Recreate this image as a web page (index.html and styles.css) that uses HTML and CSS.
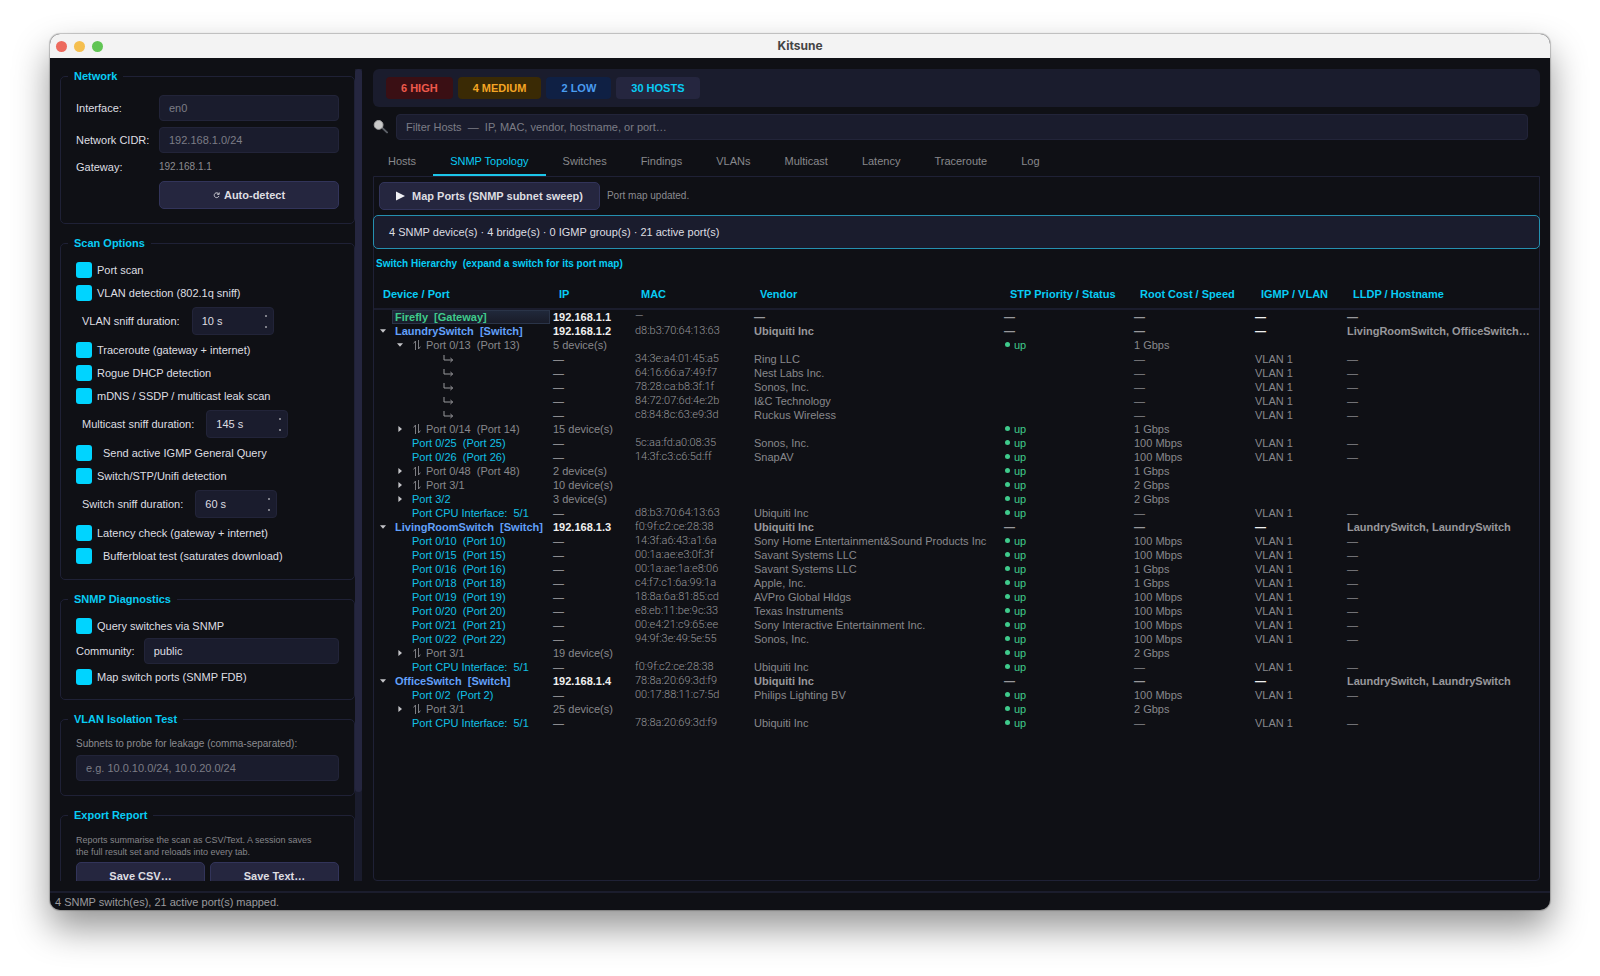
FILE: index.html
```html
<!DOCTYPE html>
<html lang="en">
<head>
<meta charset="utf-8">
<title>Kitsune</title>
<link rel="stylesheet" href="styles.css">
</head>
<body>
<svg class="defs" aria-hidden="true">
  <symbol id="open" viewBox="0 0 8 8"><path d="M1 2.2h6L4 5.8z" fill="#c4c4c8"/></symbol>
  <symbol id="shut" viewBox="0 0 8 8"><path d="M2.4 1v6L6 4z" fill="#c4c4c8"/></symbol>
  <symbol id="trunk" viewBox="0 0 8 10"><path d="M2.5 10V1L.6 3.4M5.5 0v9l1.9-2.4" fill="none" stroke="#8a8a8e" stroke-width="0.9"/></symbol>
  <symbol id="child" viewBox="0 0 11 8"><path d="M1 0v5h8.5M7.4 3l2.3 2-2.3 2" fill="none" stroke="#98989c" stroke-width="1"/></symbol>
</svg>
<div class="window">
  <header class="titlebar">
    <div class="lights"><span class="light red"></span><span class="light amber"></span><span class="light green"></span></div>
    <h1>Kitsune</h1>
  </header>
  <div class="body">
    <aside class="sidebar">
      <div class="groups">
        <fieldset class="network">
          <legend>Network</legend>
          <div class="form">
            <label for="iface">Interface:</label><input class="field" id="iface" placeholder="en0">
            <label for="cidr">Network CIDR:</label><input class="field" id="cidr" placeholder="192.168.1.0/24">
            <span>Gateway:</span><span class="small">192.168.1.1</span>
            <button class="btn detect"><svg width="7" height="8" viewBox="0 0 7 8" aria-hidden="true"><path d="M5.7 3A2.4 2.4 0 1 0 5.9 5M6.2 1.4V3.4H4.2" fill="none" stroke="#d8d8de" stroke-width="0.9"/></svg>Auto-detect</button>
          </div>
        </fieldset>
        <fieldset class="scan">
          <legend>Scan Options</legend>
          <div class="stack">
            <label class="check"><input type="checkbox" checked>Port scan</label>
            <label class="check"><input type="checkbox" checked>VLAN detection (802.1q sniff)</label>
            <div class="spinrow"><label for="s1">VLAN sniff duration:</label><div class="spin"><input id="s1" value="10 s"><div class="steps"><button aria-label="Increase"></button><button aria-label="Decrease"></button></div></div></div>
            <label class="check"><input type="checkbox" checked>Traceroute (gateway + internet)</label>
            <label class="check"><input type="checkbox" checked>Rogue DHCP detection</label>
            <label class="check"><input type="checkbox" checked>mDNS / SSDP / multicast leak scan</label>
            <div class="spinrow"><label for="s2">Multicast sniff duration:</label><div class="spin"><input id="s2" value="145 s"><div class="steps"><button aria-label="Increase"></button><button aria-label="Decrease"></button></div></div></div>
            <label class="check sub"><input type="checkbox" checked>Send active IGMP General Query</label>
            <label class="check"><input type="checkbox" checked>Switch/STP/Unifi detection</label>
            <div class="spinrow"><label for="s3">Switch sniff duration:</label><div class="spin"><input id="s3" value="60 s"><div class="steps"><button aria-label="Increase"></button><button aria-label="Decrease"></button></div></div></div>
            <label class="check"><input type="checkbox" checked>Latency check (gateway + internet)</label>
            <label class="check sub"><input type="checkbox" checked>Bufferbloat test (saturates download)</label>
          </div>
        </fieldset>
        <fieldset>
          <legend>SNMP Diagnostics</legend>
          <div class="stack tight">
            <label class="check"><input type="checkbox" checked>Query switches via SNMP</label>
            <div class="inline"><label for="comm">Community:</label><input class="field" id="comm" value="public"></div>
            <label class="check"><input type="checkbox" checked>Map switch ports (SNMP FDB)</label>
          </div>
        </fieldset>
        <fieldset>
          <legend>VLAN Isolation Test</legend>
          <div class="stack tight">
            <label class="small" for="subnets">Subnets to probe for leakage (comma-separated):</label>
            <input class="field" id="subnets" placeholder="e.g. 10.0.10.0/24, 10.0.20.0/24">
          </div>
        </fieldset>
        <fieldset>
          <legend>Export Report</legend>
          <div class="stack tight">
            <p class="tiny">Reports summarise the scan as CSV/Text. A session saves<br>the full result set and reloads into every tab.</p>
            <div class="pair"><button class="btn">Save CSV…</button><button class="btn">Save Text…</button></div>
          </div>
        </fieldset>
      </div>
      <div class="track"><div class="thumb"></div></div>
    </aside>
    <main class="main">
      <div class="summary">
        <span class="badge high">6 HIGH</span><span class="badge medium">4 MEDIUM</span><span class="badge low">2 LOW</span><span class="badge hosts">30 HOSTS</span>
      </div>
      <div class="search">
        <svg width="15" height="15" viewBox="0 0 15 15" aria-hidden="true"><path d="M9 7.6l5 4.8" stroke="#5b5f66" stroke-width="2" stroke-linecap="round"/><circle cx="5.6" cy="4.9" r="4.4" fill="#c9c9c9" stroke="#a9a9a9"/></svg>
        <input class="field" aria-label="Filter hosts" placeholder="Filter Hosts &nbsp;—&nbsp; IP, MAC, vendor, hostname, or port…">
      </div>
      <div class="tabs" role="tablist">
        <button role="tab">Hosts</button><button role="tab" class="active" aria-selected="true">SNMP Topology</button><button role="tab">Switches</button><button role="tab">Findings</button><button role="tab">VLANs</button><button role="tab">Multicast</button><button role="tab">Latency</button><button role="tab">Traceroute</button><button role="tab">Log</button>
      </div>
      <section class="panel">
        <div class="actions">
          <button class="btn map"><svg width="9" height="10" viewBox="0 0 9 10" aria-hidden="true"><path d="M0 0.5v9L9 5z" fill="#f0f0f4"/></svg>Map Ports (SNMP subnet sweep)</button>
          <span class="small">Port map updated.</span>
        </div>
        <div class="stats">4 SNMP device(s) · 4 bridge(s) · 0 IGMP group(s) · 21 active port(s)</div>
        <h2>Switch Hierarchy &nbsp;(expand a switch for its port map)</h2>
        <table>
          <colgroup><col class="c1"><col class="c2"><col class="c3"><col class="c4"><col class="c5"><col class="c6"><col class="c7"><col></colgroup>
          <thead><tr><th>Device / Port</th><th>IP</th><th>MAC</th><th>Vendor</th><th>STP Priority / Status</th><th>Root Cost / Speed</th><th>IGMP / VLAN</th><th>LLDP / Hostname</th></tr></thead>
          <tbody>
            <tr class="dev gw"><td><div class="node"><i></i><b>Firefly &nbsp;[Gateway]</b></div></td><td>192.168.1.1</td><td>—</td><td>—</td><td>—</td><td>—</td><td>—</td><td>—</td></tr>
            <tr class="dev"><td><div class="node"><i><svg><use href="#open"/></svg></i><b>LaundrySwitch &nbsp;[Switch]</b></div></td><td>192.168.1.2</td><td>d8:b3:70:64:13:63</td><td>Ubiquiti Inc</td><td>—</td><td>—</td><td>—</td><td>LivingRoomSwitch, OfficeSwitch…</td></tr>
            <tr class="trunk"><td><div class="node l1"><i><svg><use href="#open"/></svg></i><svg class="tr"><use href="#trunk"/></svg>Port 0/13 &nbsp;(Port 13)</div></td><td>5 device(s)</td><td></td><td></td><td class="up">up</td><td>1 Gbps</td><td></td><td></td></tr>
            <tr><td><div class="node l2"><svg class="ch"><use href="#child"/></svg></div></td><td>—</td><td>34:3e:a4:01:45:a5</td><td>Ring LLC</td><td></td><td>—</td><td>VLAN 1</td><td>—</td></tr>
            <tr><td><div class="node l2"><svg class="ch"><use href="#child"/></svg></div></td><td>—</td><td>64:16:66:a7:49:f7</td><td>Nest Labs Inc.</td><td></td><td>—</td><td>VLAN 1</td><td>—</td></tr>
            <tr><td><div class="node l2"><svg class="ch"><use href="#child"/></svg></div></td><td>—</td><td>78:28:ca:b8:3f:1f</td><td>Sonos, Inc.</td><td></td><td>—</td><td>VLAN 1</td><td>—</td></tr>
            <tr><td><div class="node l2"><svg class="ch"><use href="#child"/></svg></div></td><td>—</td><td>84:72:07:6d:4e:2b</td><td>I&amp;C Technology</td><td></td><td>—</td><td>VLAN 1</td><td>—</td></tr>
            <tr><td><div class="node l2"><svg class="ch"><use href="#child"/></svg></div></td><td>—</td><td>c8:84:8c:63:e9:3d</td><td>Ruckus Wireless</td><td></td><td>—</td><td>VLAN 1</td><td>—</td></tr>
            <tr class="trunk"><td><div class="node l1"><i><svg><use href="#shut"/></svg></i><svg class="tr"><use href="#trunk"/></svg>Port 0/14 &nbsp;(Port 14)</div></td><td>15 device(s)</td><td></td><td></td><td class="up">up</td><td>1 Gbps</td><td></td><td></td></tr>
            <tr><td><div class="node l1"><i></i>Port 0/25 &nbsp;(Port 25)</div></td><td>—</td><td>5c:aa:fd:a0:08:35</td><td>Sonos, Inc.</td><td class="up">up</td><td>100 Mbps</td><td>VLAN 1</td><td>—</td></tr>
            <tr><td><div class="node l1"><i></i>Port 0/26 &nbsp;(Port 26)</div></td><td>—</td><td>14:3f:c3:c6:5d:ff</td><td>SnapAV</td><td class="up">up</td><td>100 Mbps</td><td>VLAN 1</td><td>—</td></tr>
            <tr class="trunk"><td><div class="node l1"><i><svg><use href="#shut"/></svg></i><svg class="tr"><use href="#trunk"/></svg>Port 0/48 &nbsp;(Port 48)</div></td><td>2 device(s)</td><td></td><td></td><td class="up">up</td><td>1 Gbps</td><td></td><td></td></tr>
            <tr class="trunk"><td><div class="node l1"><i><svg><use href="#shut"/></svg></i><svg class="tr"><use href="#trunk"/></svg>Port 3/1</div></td><td>10 device(s)</td><td></td><td></td><td class="up">up</td><td>2 Gbps</td><td></td><td></td></tr>
            <tr class="multi"><td><div class="node l1"><i><svg><use href="#shut"/></svg></i>Port 3/2</div></td><td>3 device(s)</td><td></td><td></td><td class="up">up</td><td>2 Gbps</td><td></td><td></td></tr>
            <tr><td><div class="node l1"><i></i>Port CPU Interface: &nbsp;5/1</div></td><td>—</td><td>d8:b3:70:64:13:63</td><td>Ubiquiti Inc</td><td class="up">up</td><td>—</td><td>VLAN 1</td><td>—</td></tr>
            <tr class="dev"><td><div class="node"><i><svg><use href="#open"/></svg></i><b>LivingRoomSwitch &nbsp;[Switch]</b></div></td><td>192.168.1.3</td><td>f0:9f:c2:ce:28:38</td><td>Ubiquiti Inc</td><td>—</td><td>—</td><td>—</td><td>LaundrySwitch, LaundrySwitch</td></tr>
            <tr><td><div class="node l1"><i></i>Port 0/10 &nbsp;(Port 10)</div></td><td>—</td><td>14:3f:a6:43:a1:6a</td><td>Sony Home Entertainment&amp;Sound Products Inc</td><td class="up">up</td><td>100 Mbps</td><td>VLAN 1</td><td>—</td></tr>
            <tr><td><div class="node l1"><i></i>Port 0/15 &nbsp;(Port 15)</div></td><td>—</td><td>00:1a:ae:e3:0f:3f</td><td>Savant Systems LLC</td><td class="up">up</td><td>100 Mbps</td><td>VLAN 1</td><td>—</td></tr>
            <tr><td><div class="node l1"><i></i>Port 0/16 &nbsp;(Port 16)</div></td><td>—</td><td>00:1a:ae:1a:e8:06</td><td>Savant Systems LLC</td><td class="up">up</td><td>1 Gbps</td><td>VLAN 1</td><td>—</td></tr>
            <tr><td><div class="node l1"><i></i>Port 0/18 &nbsp;(Port 18)</div></td><td>—</td><td>c4:f7:c1:6a:99:1a</td><td>Apple, Inc.</td><td class="up">up</td><td>1 Gbps</td><td>VLAN 1</td><td>—</td></tr>
            <tr><td><div class="node l1"><i></i>Port 0/19 &nbsp;(Port 19)</div></td><td>—</td><td>18:8a:6a:81:85:cd</td><td>AVPro Global Hldgs</td><td class="up">up</td><td>100 Mbps</td><td>VLAN 1</td><td>—</td></tr>
            <tr><td><div class="node l1"><i></i>Port 0/20 &nbsp;(Port 20)</div></td><td>—</td><td>e8:eb:11:be:9c:33</td><td>Texas Instruments</td><td class="up">up</td><td>100 Mbps</td><td>VLAN 1</td><td>—</td></tr>
            <tr><td><div class="node l1"><i></i>Port 0/21 &nbsp;(Port 21)</div></td><td>—</td><td>00:e4:21:c9:65:ee</td><td>Sony Interactive Entertainment Inc.</td><td class="up">up</td><td>100 Mbps</td><td>VLAN 1</td><td>—</td></tr>
            <tr><td><div class="node l1"><i></i>Port 0/22 &nbsp;(Port 22)</div></td><td>—</td><td>94:9f:3e:49:5e:55</td><td>Sonos, Inc.</td><td class="up">up</td><td>100 Mbps</td><td>VLAN 1</td><td>—</td></tr>
            <tr class="trunk"><td><div class="node l1"><i><svg><use href="#shut"/></svg></i><svg class="tr"><use href="#trunk"/></svg>Port 3/1</div></td><td>19 device(s)</td><td></td><td></td><td class="up">up</td><td>2 Gbps</td><td></td><td></td></tr>
            <tr><td><div class="node l1"><i></i>Port CPU Interface: &nbsp;5/1</div></td><td>—</td><td>f0:9f:c2:ce:28:38</td><td>Ubiquiti Inc</td><td class="up">up</td><td>—</td><td>VLAN 1</td><td>—</td></tr>
            <tr class="dev"><td><div class="node"><i><svg><use href="#open"/></svg></i><b>OfficeSwitch &nbsp;[Switch]</b></div></td><td>192.168.1.4</td><td>78:8a:20:69:3d:f9</td><td>Ubiquiti Inc</td><td>—</td><td>—</td><td>—</td><td>LaundrySwitch, LaundrySwitch</td></tr>
            <tr><td><div class="node l1"><i></i>Port 0/2 &nbsp;(Port 2)</div></td><td>—</td><td>00:17:88:11:c7:5d</td><td>Philips Lighting BV</td><td class="up">up</td><td>100 Mbps</td><td>VLAN 1</td><td>—</td></tr>
            <tr class="trunk"><td><div class="node l1"><i><svg><use href="#shut"/></svg></i><svg class="tr"><use href="#trunk"/></svg>Port 3/1</div></td><td>25 device(s)</td><td></td><td></td><td class="up">up</td><td>2 Gbps</td><td></td><td></td></tr>
            <tr><td><div class="node l1"><i></i>Port CPU Interface: &nbsp;5/1</div></td><td>—</td><td>78:8a:20:69:3d:f9</td><td>Ubiquiti Inc</td><td class="up">up</td><td>—</td><td>VLAN 1</td><td>—</td></tr>
          </tbody>
        </table>
      </section>
    </main>
  </div>
  <footer class="status">4 SNMP switch(es), 21 active port(s) mapped.</footer>
</div>
</body>
</html>
```
FILE: styles.css
```css
* { box-sizing: border-box; }
body {
  margin: 0;
  height: 100vh;
  padding: 34px 50px 66px;
  background: #fff;
  font: 11px/14px "Liberation Sans", Arial, sans-serif;
  color: #dedee2;
  overflow: hidden;
}
button, input { font: inherit; color: inherit; margin: 0; }
h1, h2, p { margin: 0; font-size: inherit; }
.defs { position: absolute; width: 0; height: 0; }

.window {
  height: 100%;
  display: flex;
  flex-direction: column;
  border-radius: 10px;
  overflow: hidden;
  background: #0f1015;
  box-shadow: 0 0 1px 1px rgba(0, 0, 0, .22), 0 18px 36px rgba(0, 0, 0, .42);
}
.titlebar {
  flex: none;
  height: 24px;
  display: grid;
  grid-template-columns: 1fr auto 1fr;
  align-items: center;
  padding: 0 6px;
  background: #f3f3f3;
  color: #444;
}
.titlebar h1 { font: bold 12px/14px Inter, sans-serif; }
.lights { display: flex; gap: 7px; }
.light { width: 11px; height: 11px; border-radius: 50%; }
.red { background: #ed6a5e; }
.amber { background: #f5bf4f; }
.green { background: #61c554; }

.body { flex: 1; min-height: 0; display: flex; gap: 11px; padding: 11px 10px 10px; }
.sidebar { flex: none; width: 302px; display: flex; overflow: hidden; }
.groups { flex: 1; min-width: 0; display: flex; flex-direction: column; gap: 12px; overflow: hidden; }
.track { width: 7px; background: #1a1c2d; }
.thumb { height: 89%; background: #25263f; border-radius: 4px; }

fieldset {
  flex: none;
  min-width: 0;
  margin: 0;
  padding: 11px 15px 14px;
  border: 1px solid #1f2136;
  border-radius: 5px;
}
.network { padding-top: 12px; }
.scan { padding-bottom: 15px; }
legend { margin-left: -8px; padding: 0 6px; height: 14px; color: #08ccf4; font-weight: bold; }
.form { display: grid; grid-template-columns: 76px 1fr; gap: 6px 7px; align-items: center; white-space: nowrap; }
.form > span { line-height: 16px; }
.field {
  width: 100%;
  min-width: 0;
  height: 26px;
  padding: 0 9px;
  background: #1a1c2d;
  border: 1px solid #222439;
  border-radius: 4px;
  outline: none;
}
.field::placeholder { color: #7c7d86; opacity: 1; }
.small { font-size: 10px; color: #8b8b90; }
.tiny { font-size: 9px; line-height: 12px; color: #85858a; padding-top: 1px; white-space: nowrap; }
.btn {
  height: 28px;
  padding: 0 14px;
  display: flex;
  align-items: center;
  justify-content: center;
  background: #25263f;
  border: 1px solid #32345a;
  border-radius: 5px;
  font-weight: bold;
}
.detect { grid-column: 2; gap: 4px; }
.stack { display: flex; flex-direction: column; gap: 6px; }
.tight { gap: 4px; }
.check { display: flex; align-items: center; gap: 5px; height: 17px; }
.sub { gap: 11px; }
.check input { appearance: none; width: 16px; height: 16px; border-radius: 3px; background: #00d4ff; }
.spinrow { display: flex; align-items: center; gap: 12px; padding-left: 6px; }
.spin { display: flex; width: 82px; height: 28px; background: #1a1c2d; border: 1px solid #222439; border-radius: 4px; }
.spin input { flex: 1; min-width: 0; padding: 0 9px; background: none; border: 0; outline: none; }
.steps { width: 14px; display: flex; flex-direction: column; justify-content: center; }
.steps button { height: 11px; padding: 0; border: 0; background: none; display: grid; place-items: center; }
.steps button::before { content: ""; width: 2px; height: 2px; border-radius: 1px; background: #a0a0a8; }
.inline { display: flex; align-items: center; gap: 9px; }
.pair { display: grid; grid-template-columns: 1fr 1fr; gap: 5px; }

.main { flex: 1; min-width: 0; display: flex; flex-direction: column; }
.summary { display: flex; gap: 5px; padding: 8px 13px; background: #1a1c2d; border-radius: 6px; }
.badge { padding: 0 15px; line-height: 22px; border-radius: 4px; font-weight: bold; }
.high { background: #3a0f14; color: #ee5a4c; }
.medium { background: #3a2a05; color: #f5a524; }
.low { background: #0f2044; color: #4a9cf0; }
.hosts { background: #25263f; color: #08ccf4; }
.search { display: flex; align-items: center; gap: 8px; padding: 7px 12px 0 0; }
.search svg { flex: none; }
.tabs { display: flex; margin-top: 7px; }
.tabs button { height: 29px; padding: 0 17px; background: none; border: 0; border-bottom: 2px solid transparent; color: #88888c; }
.tabs .active { color: #08ccf4; border-color: #1cc6ea; }
.tabs button:first-child { padding-left: 15px; }

.panel { flex: 1; min-height: 0; border: 1px solid #1f2136; border-radius: 0 0 4px 4px; }
.actions { display: flex; align-items: center; gap: 7px; padding: 5px 5px 5px; }
.map { gap: 7px; padding: 0 16px; }
.stats { margin: 0 -1px; padding: 9px 15px; line-height: 14px; background: #1a1c2d; border: 1px solid #2590b0; border-radius: 5px; }
h2 { padding: 8px 2px 9px; font-size: 10px; color: #08ccf4; }

table { width: 100%; table-layout: fixed; border-collapse: collapse; white-space: nowrap; }
.c1 { width: 176px; }
.c2 { width: 82px; }
.c3 { width: 119px; }
.c4 { width: 250px; }
.c5 { width: 130px; }
.c6 { width: 121px; }
.c7 { width: 92px; }
th { height: 29px; padding: 0 9px; text-align: left; color: #08ccf4; border-bottom: 2px solid #1b1d2d; }
td { height: 14px; padding: 0 3px; overflow: hidden; text-overflow: ellipsis; color: #88888c; }
td:first-child { padding: 0; color: #12c0e6; }
td:nth-child(2) { color: #a8a8ac; }
td:nth-child(3) { font-family: Roboto, sans-serif; font-weight: 300; color: #98989c; }
.dev td { font-weight: bold; color: #98989c; }
.dev td:nth-child(2), .dev td:nth-child(7) { color: #f0f0f0; }
.dev td:nth-child(3) { font-weight: 300; }
.trunk td:first-child, .trunk td:nth-child(2), .multi td:nth-child(2) { color: #88888c; }
.node { display: flex; align-items: center; height: 14px; padding-left: 5px; }
.node i { flex: none; width: 13px; display: flex; }
.node i svg { width: 8px; height: 8px; }
.node b { flex: 1; padding-left: 3px; color: #62a0fa; }
.gw b { height: 14px; line-height: 12px; padding-left: 2px; color: #3fcb8c; background: linear-gradient(#20283a, #191c29); border: 1px solid #2a3448; }
.l1 { padding-left: 22px; }
.l1 i { width: 16px; }
.l2 { padding-left: 69px; }
.tr { width: 8px; height: 10px; margin: 0 5px 0 1px; }
.ch { width: 11px; height: 8px; }
.up, .trunk .up { color: #3fcb8c; }
.up::before { content: ""; display: inline-block; width: 5px; height: 5px; margin: 0 4px 2px 1px; border-radius: 50%; background: #3fcb8c; }

.status { flex: none; height: 19px; padding: 0 5px; border-top: 2px solid #1b1d2d; line-height: 18px; color: #9a9a9e; }
```
